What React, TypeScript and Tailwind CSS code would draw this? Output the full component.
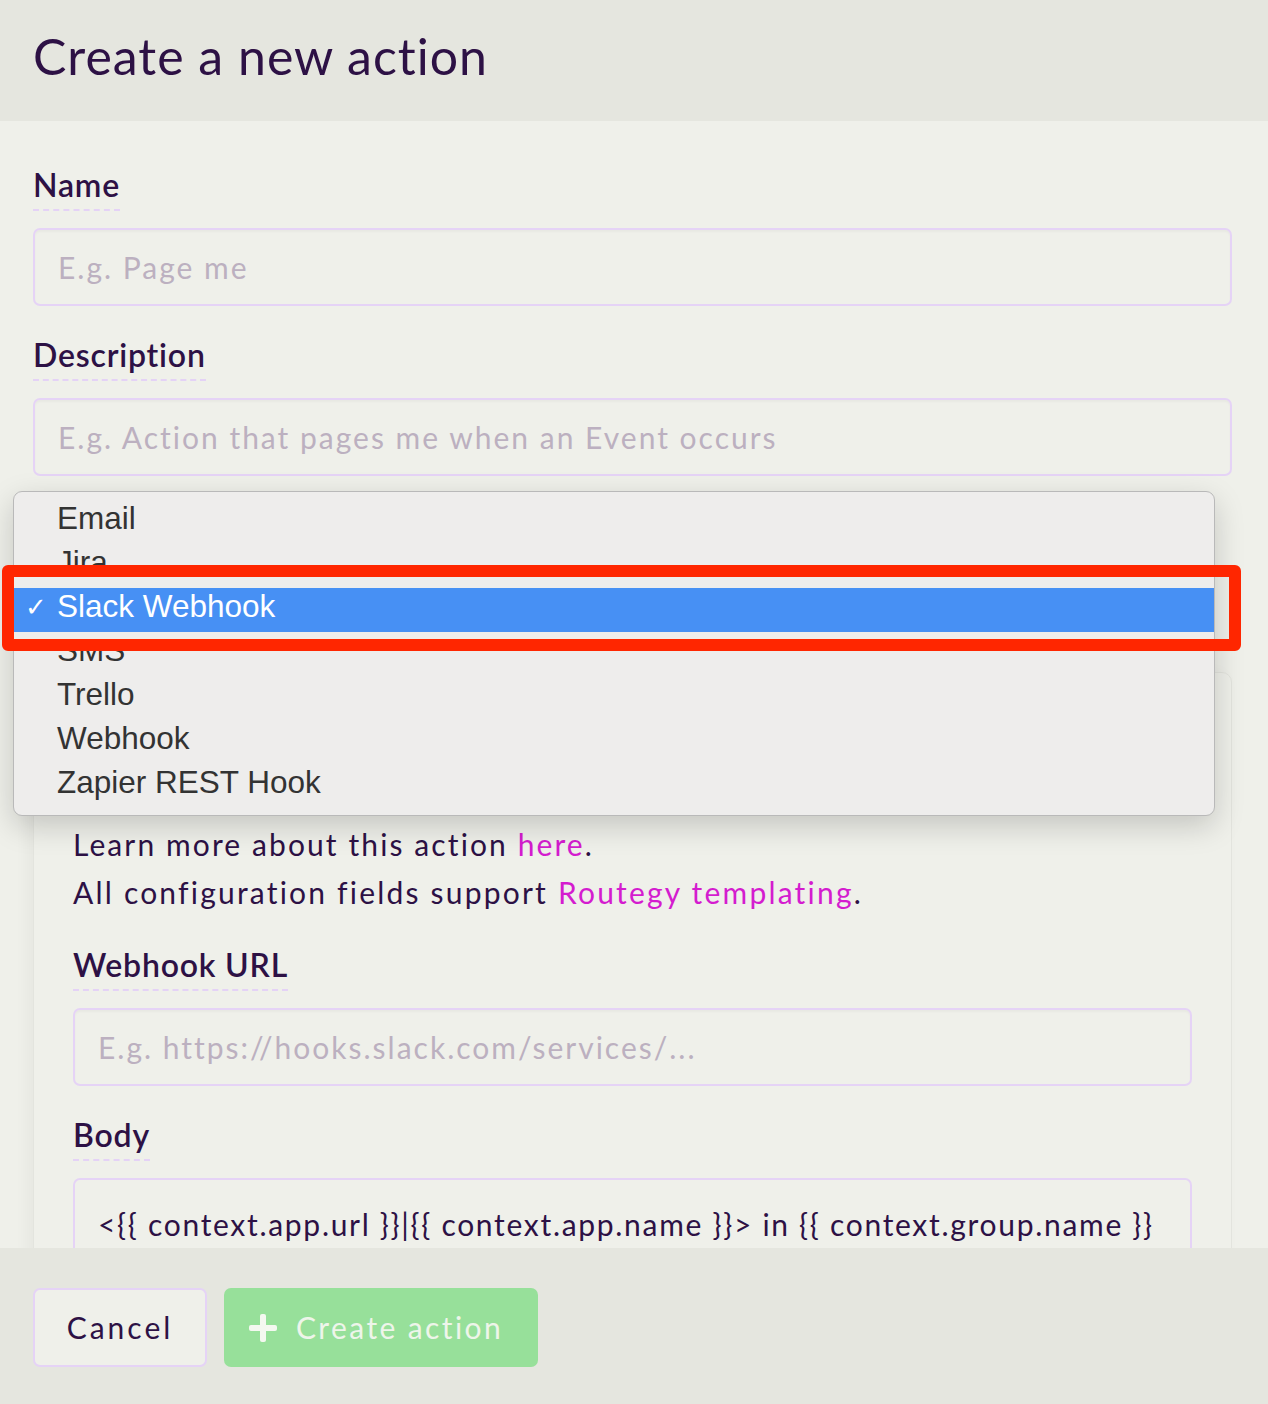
import React from "react";

const font = { fontFamily: "Lato, 'Noto Sans', sans-serif" };

function Label({ children }: { children: React.ReactNode }) {
  return (
    <div className="flex">
      <span className="text-[32px] leading-[36px] font-semibold text-[#2d1145] border-b-2 border-dashed border-[#e4d2f6] pb-[6px] tracking-[0.8px]">
        {children}
      </span>
    </div>
  );
}

function Input({ placeholder }: { placeholder: string }) {
  return (
    <div className="h-[78px] rounded-[7px] border-2 border-[#e5d3f6] bg-[#eff0ea] shadow-[inset_0_2px_2px_rgba(0,0,0,0.03)] flex items-center pl-[23px] text-[30px] tracking-[2px] text-[#bcb0c0] whitespace-nowrap">
      {placeholder}
    </div>
  );
}

export default function App() {
  const options = ["Email", "Jira", "Slack Webhook", "SMS", "Trello", "Webhook", "Zapier REST Hook"];
  return (
    <div className="relative w-[1268px] h-[1404px] overflow-hidden bg-[#eff0ea] flex flex-col" style={font}>
      <div className="h-[121px] shrink-0 bg-[#e5e6df] flex items-center pl-[33px] pb-[8px]">
        <h1 className="text-[50px] text-[#2d1145] font-normal tracking-[1px]">Create a new action</h1>
      </div>
      <div className="flex-1 overflow-hidden pl-[33px] pr-[36px] pt-[46px] flex flex-col">
        <Label>Name</Label>
        <div className="mt-[17px]"><Input placeholder="E.g. Page me" /></div>
        <div className="mt-[31px]"><Label>Description</Label></div>
        <div className="mt-[17px]"><Input placeholder="E.g. Action that pages me when an Event occurs" /></div>
        <div className="mt-[31px]"><Label>Type</Label></div>
        <div className="mt-[17px]"><Input placeholder="Slack Webhook" /></div>
        <div className="mt-[26px] rounded-[10px] border border-[#e3e4de] shadow-[-6px_0_14px_rgba(0,0,0,0.04)] px-[39px] pt-[147px] pb-[40px] flex flex-col">
          <p className="text-[30px] leading-[48px] tracking-[2.1px] text-[#2d1145] whitespace-nowrap">
            Learn more about this action <span className="text-[#d41ccf]">here</span>.
          </p>
          <p className="text-[30px] leading-[48px] tracking-[2.2px] text-[#2d1145] whitespace-nowrap">
            All configuration fields support <span className="text-[#d41ccf]">Routegy templating</span>.
          </p>
          <div className="mt-[31px]"><Label>Webhook URL</Label></div>
          <div className="mt-[17px]"><Input placeholder="E.g. https://hooks.slack.com/services/..." /></div>
          <div className="mt-[31px]"><Label>Body</Label></div>
          <div className="mt-[17px] h-[160px] rounded-[7px] border-2 border-[#e5d3f6] pl-[23px] pt-[22px] text-[30px] tracking-[1.7px] text-[#2d1145] whitespace-nowrap">
            {"<{{ context.app.url }}|{{ context.app.name }}> in {{ context.group.name }}"}
          </div>
        </div>
      </div>
      <div className="h-[156px] shrink-0 bg-[#e5e6df] flex items-start gap-[17px] pl-[33px] pt-[40px]">
        <button className="h-[79px] w-[174px] rounded-[7px] border-2 border-[#e5d3f6] bg-[#eff0ea] text-[30px] tracking-[3px] text-[#2d1145]">
          Cancel
        </button>
        <button className="h-[79px] w-[314px] rounded-[7px] bg-[#97e09a] flex items-center pl-[25px] gap-[19px] text-[30px] tracking-[2.4px] text-[#eef5ea]">
          <svg width="28" height="28" viewBox="0 0 28 28">
            <rect x="11" y="0" width="6" height="28" rx="2" fill="#f4f8f0" />
            <rect x="0" y="11" width="28" height="6" rx="2" fill="#f4f8f0" />
          </svg>
          <span>Create action</span>
        </button>
      </div>

      {/* native select dropdown overlay */}
      <div
        className="absolute left-[13px] top-[491px] w-[1202px] h-[325px] rounded-[9px] border border-[#b9b9b9] bg-[#eeedec] shadow-[0_10px_30px_rgba(0,0,0,0.18)] pt-[8px]"
        style={{ fontFamily: "'Liberation Sans', Arial, sans-serif" }}
      >
        {options.map((o) => {
          const sel = o === "Slack Webhook";
          return (
            <div
              key={o}
              className={
                sel
                  ? "h-[44px] flex items-center pb-[6px] bg-[#4790f4] text-white text-[31.5px]"
                  : "h-[44px] flex items-center pb-[6px] text-[#333333] text-[31.5px]"
              }
            >
              <span className="w-[43px] pl-[11px] text-[26px]">{sel ? "✓" : ""}</span>
              <span>{o}</span>
            </div>
          );
        })}
      </div>
      {/* red highlight */}
      <div className="absolute left-[2px] top-[565px] w-[1239px] h-[86px] border-[12px] border-[#ff2600] rounded-[6px]" />
    </div>
  );
}
